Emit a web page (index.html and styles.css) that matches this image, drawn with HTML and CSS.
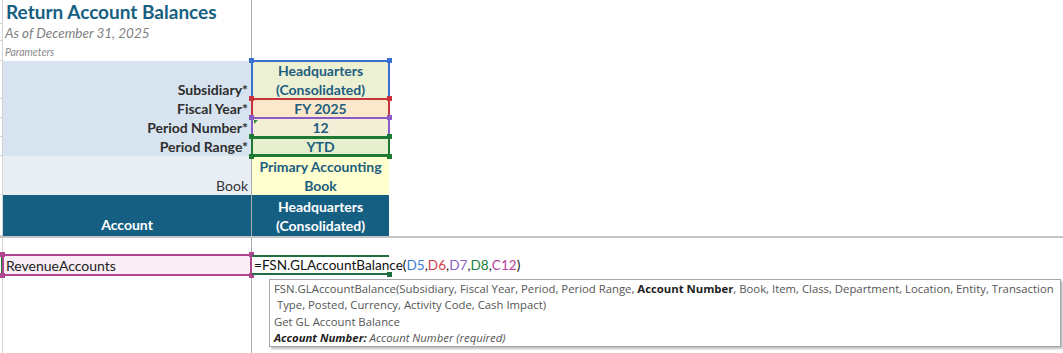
FILE: index.html
```html
<!DOCTYPE html>
<html lang="en">
<head>
	<meta charset="UTF-8">
	<title>Return Account Balances</title>
	<link rel="stylesheet" href="styles.css">
</head>
<body>
	<div class="sheet">
		<div class="row r1">
			<div class="ca"></div>
			<div class="cc title">Return Account Balances</div>
			<div class="cd"></div>
		</div>
		<div class="row r2">
			<div class="ca"></div>
			<div class="cc subtitle">As of December 31, 2025</div>
			<div class="cd"></div>
		</div>
		<div class="row r3">
			<div class="ca"></div>
			<div class="cc note">Parameters</div>
			<div class="cd"></div>
		</div>

		<!-- parameters -->
		<div class="row r-tall">
			<div class="ca"></div>
			<div class="cc label param">Subsidiary*</div>
			<div class="cd value ref ref-blue">
				<span>Headquarters<br>(Consolidated)</span>
				<i class="h tl"></i><i class="h tr"></i>
			</div>
		</div>
		<div class="row r-std">
			<div class="ca"></div>
			<div class="cc label param">Fiscal Year*</div>
			<div class="cd value ref ref-red">
				<span>FY 2025</span>
				<i class="h tl"></i><i class="h tr"></i>
			</div>
		</div>
		<div class="row r-std">
			<div class="ca"></div>
			<div class="cc label param">Period Number*</div>
			<div class="cd value ref ref-purple">
				<span>12</span>
				<i class="err"></i>
				<i class="h tl"></i><i class="h tr"></i>
			</div>
		</div>
		<div class="row r-std">
			<div class="ca"></div>
			<div class="cc label param">Period Range*</div>
			<div class="cd value ref ref-green">
				<span>YTD</span>
				<i class="h tl"></i><i class="h tr"></i><i class="h bl"></i><i class="h br"></i>
			</div>
		</div>
		<div class="row r-book">
			<div class="ca"></div>
			<div class="cc label book">Book</div>
			<div class="cd value book-val"><span>Primary Accounting<br>Book</span></div>
		</div>

		<!-- header -->
		<div class="row r-head">
			<div class="ca"></div>
			<div class="cc head">Account</div>
			<div class="cd head head-d">Headquarters<br>(Consolidated)</div>
		</div>
		<div class="freeze-h"></div>

		<div class="row r10">
			<div class="ca"></div>
			<div class="cc"></div>
			<div class="cd"></div>
		</div>
		<div class="row r11">
			<div class="ca sel"></div>
			<div class="cc acct ref ref-magenta">
				RevenueAccounts
				<i class="h tl"></i><i class="h tr"></i><i class="h bl"></i><i class="h br"></i>
			</div>
			<div class="cd formula">
				=FSN.GLAccountBalance(<span class="f-blue">D5</span>,<span class="f-red">D6</span>,<span class="f-purple">D7</span>,<span class="f-green">D8</span>,<span class="f-magenta">C12</span>)<span class="caret"></span>
				<i class="fill"></i>
			</div>
		</div>
		<div class="row r-rest">
			<div class="ca"></div>
			<div class="cc"></div>
			<div class="cd"></div>
		</div>

		<!-- function tooltip -->
		<div class="tip">
			<div>FSN.GLAccountBalance(Subsidiary, Fiscal Year, Period, Period Range, <b>Account Number</b>, Book, Item, Class, Department, Location, Entity, Transaction</div>
			<div>&nbsp;Type, Posted, Currency, Activity Code, Cash Impact)</div>
			<div>Get GL Account Balance</div>
			<div><b><i>Account Number:</i></b> <i>Account Number (required)</i></div>
		</div>
	</div>
</body>
</html>
```

FILE: styles.css
```css
* {padding: 0; margin: 0; box-sizing: border-box;}
body {
	background: #fff;
	font-family: "Lato", "Liberation Sans", sans-serif;
	font-size: 14px;
	color: #333;
}
.sheet {
	position: relative;
	width: 1063px;
	height: 353px;
	overflow: hidden;
}
.row {
	display: grid;
	grid-template-columns: 3px 249px 137px 1fr;
}
.r1 { height: 23px; }
.r2 { height: 18px; }
.r3 { height: 20px; }
.r-tall { height: 38px; }
.r-std { height: 19px; }
.r-book { height: 39px; }
.r-head { height: 41px; }
.r10 { height: 17px; }
.r11 { height: 20px; }
.r-rest { height: 80px; }

.ca {
	border-right: 1px solid #d4d4d4;
	border-bottom: 1px solid #d4d4d4;
}
.cc {
	border-right: 1px solid #ababab;
	display: flex;
	align-items: flex-end;
	padding-left: 3px;
	white-space: nowrap;
}
.cd {
	display: flex;
	align-items: center;
	justify-content: center;
	text-align: center;
}

.title {
	font-size: 19px;
	font-weight: bold;
	color: #156082;
	padding-bottom: 1px;
}
.subtitle {
	font-size: 13.5px;
	font-style: italic;
	color: #7f7f7f;
	padding-left: 2px;
}
.note {
	font-size: 10.5px;
	font-style: italic;
	color: #8a8a8a;
	padding-bottom: 3px;
	padding-left: 2px;
}

.label {
	justify-content: flex-end;
	padding-right: 3px;
	padding-bottom: 1px;
}
.param {
	background: #d7e3ee;
	font-weight: bold;
	color: #2e2e2e;
}
.book {
	background: #e9eef5;
}

.value {
	font-weight: bold;
	color: #1d5e7e;
	line-height: 19px;
	position: relative;
}
.book-val {
	background: #ffffd0;
}

.head {
	background: #156082;
	color: #fff;
	font-weight: bold;
}
.cc.head {
	justify-content: center;
	padding: 0 0 3px;
}
.head-d {
	line-height: 19px;
	padding-top: 1px;
}
.freeze-h {
	height: 2px;
	background: #c4c4c4;
}

/* referenced ranges */
.ref {
	position: relative;
}
.ref::after {
	content: "";
	position: absolute;
	top: -1px;
	left: -1px;
	right: -1px;
	bottom: -1px;
	border: 2px solid var(--rc);
	pointer-events: none;
}
.h {
	position: absolute;
	width: 5px;
	height: 5px;
	background: var(--rc);
	z-index: 2;
}
.h.tl { top: -3px; left: -3px; }
.h.tr { top: -3px; right: -3px; }
.h.bl { bottom: -3px; left: -3px; }
.h.br { bottom: -3px; right: -3px; }
.ref-blue { --rc: #3b6fcf; background: #ecf1d4; }
.ref-red { --rc: #c8323c; background: #fbe8cb; z-index: 1; }
.ref-purple { --rc: #8a5bc4; background: #f3eed6; z-index: 1; }
.ref-green { --rc: #1d7a35; background: #e6f0cf; z-index: 1; }
.ref-green::after { border-width: 3px 2px; }
.ref-magenta { --rc: #b2458f; background: #f9eef5; }

.err {
	position: absolute;
	top: 2px;
	left: 2px;
	width: 0;
	height: 0;
	border-top: 4px solid #2e8b3a;
	border-right: 4px solid transparent;
}

/* formula row */
.sel {
	border-right: 2px solid #1d7a35;
}
.acct {
	align-items: center;
	color: #222;
	padding-left: 3px;
}
.formula {
	justify-content: flex-start;
	padding-left: 2px;
	position: relative;
	white-space: nowrap;
	color: #111;
	font-size: 13.6px;
	border-top: 2px solid #1e6e3f;
	border-bottom: 2px solid #1e6e3f;
	z-index: 3;
}
.f-blue { color: #3e7bd6; }
.f-red { color: #d1404a; }
.f-purple { color: #8d63c9; }
.f-green { color: #1b8040; }
.f-magenta { color: #b8449a; }
.caret {
	display: inline-block;
	width: 1px;
	height: 15px;
	background: #000;
	vertical-align: middle;
	margin-left: 1px;
}
.fill {
	position: absolute;
	right: -3px;
	bottom: -4px;
	width: 5px;
	height: 5px;
	background: #1e6e3f;
}

/* tooltip */
.tip {
	position: absolute;
	left: 269px;
	top: 279px;
	width: 792px;
	height: 68px;
	background: #fff;
	border: 1px solid #a6a6a6;
	box-shadow: 2px 2px 2px rgba(0, 0, 0, .25);
	padding: 1px 0 0 4px;
	font-family: "Open Sans", "Noto Sans", sans-serif;
	font-size: 11.33px;
	line-height: 16.4px;
	color: #555;
	white-space: nowrap;
	z-index: 5;
}
.tip b {
	color: #222;
}
```
